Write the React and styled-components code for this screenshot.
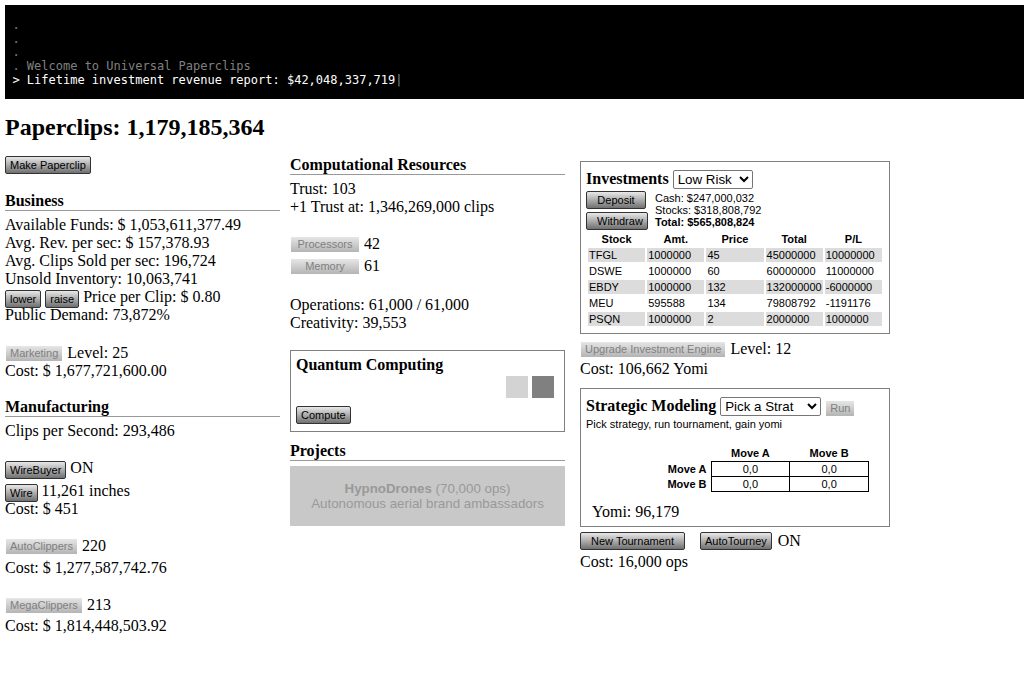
import React from 'react'
import styled, { createGlobalStyle, css } from 'styled-components'

const GlobalStyle = createGlobalStyle`
  html, body { margin: 0; padding: 0; background: #fff; }
  body {
    font-family: "Liberation Serif", "Times New Roman", serif;
    font-size: 16px;
    line-height: 18px;
    color: #000;
  }
`

const Page = styled.div`
  padding: 5px 0 0 5px;
  width: 1019px;
  height: 678px;
  overflow: hidden;
`

const Console = styled.div`
  background: #000;
  height: 94px;
  box-sizing: border-box;
  padding: 14px 7.4px 0;
  font-family: "DejaVu Sans Mono", "Liberation Mono", monospace;
  font-size: 12px;
  line-height: 13.7px;
  white-space: pre;
`

const ConsoleLine = styled.div`
  color: ${(p) => (p.$current ? '#fff' : '#808080')};
`

const Cursor = styled.span`
  color: #888;
`

const Title = styled.h1`
  margin: 16px 0 0;
  font-size: 24px;
  line-height: 24px;
  font-weight: bold;
`

const Columns = styled.div`
  display: flex;
  margin-top: 16px;
`

const Column = styled.div`
  width: ${(p) => p.$width}px;
  margin-right: ${(p) => p.$gap || 0}px;
`

const Button = styled.button`
  display: inline-block;
  box-sizing: border-box;
  height: 18px;
  padding: 0 4px;
  margin: 0;
  font-family: "Liberation Sans", Arial, sans-serif;
  font-size: 11px;
  line-height: 14px;
  color: #000;
  border: 1px solid #333;
  border-radius: 2px;
  background: linear-gradient(#e8e8e8, #707070);
  vertical-align: middle;
  width: ${(p) => (p.$width ? `${p.$width}px` : 'auto')};

  ${(p) =>
    p.disabled &&
    css`
      height: 17px;
      line-height: 15px;
      margin-bottom: 2px;
      border: 1px solid transparent;
      border-radius: 0;
      color: #808080;
      background: linear-gradient(#e6e6e6, #b4b4b4) padding-box;
    `}
`

const WithdrawButton = styled(Button)`
  padding: 0 0 0 10px;
  text-align: left;
`

const SectionHead = styled.h3`
  margin: ${(p) => p.$top || 0}px 0 5px;
  font-size: 16px;
  line-height: 18px;
  font-weight: bold;
  border-bottom: 1px solid #999;
`

const Line = styled.div`
  height: 18px;
  margin-top: ${(p) => p.$top || 0}px;
  white-space: nowrap;
`

const TightButton = styled(Button)`
  margin-right: ${(p) => p.$right ?? 4}px;
`

const Panel = styled.div`
  box-sizing: border-box;
  width: ${(p) => p.$width}px;
  height: ${(p) => p.$height}px;
  margin-top: ${(p) => p.$top || 0}px;
  border: 1px solid #808080;
  padding: 5px;
`

const PanelTitle = styled.span`
  font-size: 16px;
  font-weight: bold;
  margin-right: 4px;
`

const QuantumHead = styled.div`
  font-size: 16px;
  line-height: 18px;
  font-weight: bold;
`

const Chips = styled.div`
  display: flex;
  justify-content: flex-end;
  gap: 4px;
  padding-right: 5px;
  margin-top: 2px;
  height: 29px;
`

const Chip = styled.div`
  width: 22px;
  height: 22px;
  background: ${(p) => p.$color};
`

const ProjectCard = styled.div`
  height: 60px;
  background: #c8c8c8;
  color: #999;
  font-family: "Liberation Sans", Arial, sans-serif;
  font-size: 13.33px;
  line-height: 15px;
  text-align: center;
  box-sizing: border-box;
  padding-top: 15px;
`

const PanelRow = styled.div`
  display: flex;
  align-items: center;
  height: 23px;
`

const Select = styled.select`
  box-sizing: border-box;
  height: 19px;
  width: ${(p) => p.$width}px;
  margin: 2px 4px 0 0;
  padding: 0;
  font-family: "Liberation Sans", Arial, sans-serif;
  font-size: 13.33px;
  background: #fff;
  color: #000;
  border: 1px solid #767676;
  border-radius: 2px;
`

const RunButton = styled(Button)`
  margin: 6px 0 0;
`

const FundRow = styled.div`
  display: flex;
  height: 39px;
  margin-top: 1px;
`

const FundButtons = styled.div`
  display: flex;
  flex-direction: column;
  align-items: flex-start;
  gap: 3px;
  width: 69px;
`

const Stats = styled.div`
  font-family: "Liberation Sans", Arial, sans-serif;
  font-size: 11px;
  line-height: 12px;
  padding-top: 1px;
`

const Bold = styled.strong`
  font-weight: bold;
`

const StockTable = styled.table`
  width: 298px;
  table-layout: fixed;
  border-collapse: separate;
  border-spacing: 2px;
  margin: 0;
  font-family: "Liberation Sans", Arial, sans-serif;
  font-size: 11px;
  line-height: 14px;

  th { padding: 0; height: 14px; font-weight: bold; text-align: center; }
  td { padding: 0 1px; height: 14px; overflow: hidden; white-space: nowrap; }
  tbody tr:nth-child(odd) td { background: #dcdcdc; }
`

const SmallText = styled.div`
  font-family: "Liberation Sans", Arial, sans-serif;
  font-size: 11px;
  line-height: 13px;
  margin-top: 1px;
`

const MoveTable = styled.table`
  border-collapse: collapse;
  table-layout: fixed;
  margin: 15px 0 0 77px;
  width: 206px;
  font-family: "Liberation Sans", Arial, sans-serif;
  font-size: 11px;
  line-height: 13px;

  th { padding: 0; height: 15px; font-weight: bold; }
  th.head { width: 44px; padding-right: 4px; text-align: right; white-space: nowrap; }
  td { border: 1px solid #000; padding: 0; text-align: center; height: 14px; }
`

const YomiLine = styled.div`
  height: 18px;
  margin: 11px 0 0 6px;
`

const StatusRow = styled.div`
  display: flex;
  align-items: center;
  height: 18px;
  margin-top: 5px;
`

const stocks = [
  ['TFGL', '1000000', '45', '45000000', '10000000'],
  ['DSWE', '1000000', '60', '60000000', '11000000'],
  ['EBDY', '1000000', '132', '132000000', '-6000000'],
  ['MEU', '595588', '134', '79808792', '-1191176'],
  ['PSQN', '1000000', '2', '2000000', '1000000'],
]

export default function App() {
  return (
    <Page>
      <GlobalStyle />
      <Console>
        <ConsoleLine>.</ConsoleLine>
        <ConsoleLine>.</ConsoleLine>
        <ConsoleLine>.</ConsoleLine>
        <ConsoleLine>. Welcome to Universal Paperclips</ConsoleLine>
        <ConsoleLine $current>
          {'> Lifetime investment revenue report: $42,048,337,719'}
          <Cursor>|</Cursor>
        </ConsoleLine>
      </Console>

      <Title>Paperclips: 1,179,185,364</Title>

      <Columns>
        <Column $width={275} $gap={10}>
          <Button>Make Paperclip</Button>

          <SectionHead $top={18}>Business</SectionHead>
          <Line>Available Funds: $ 1,053,611,377.49</Line>
          <Line>Avg. Rev. per sec: $ 157,378.93</Line>
          <Line>Avg. Clips Sold per sec: 196,724</Line>
          <Line>Unsold Inventory: 10,063,741</Line>
          <Line>
            <TightButton>lower</TightButton>
            <TightButton>raise</TightButton>
            Price per Clip: $ 0.80
          </Line>
          <Line>Public Demand: 73,872%</Line>
          <Line $top={20}>
            <TightButton disabled>Marketing</TightButton>
            Level: 25
          </Line>
          <Line>Cost: $ 1,677,721,600.00</Line>

          <SectionHead $top={18}>Manufacturing</SectionHead>
          <Line>Clips per Second: 293,486</Line>
          <Line $top={19}>
            <TightButton>WireBuyer</TightButton>
            ON
          </Line>
          <Line $top={5}>
            <TightButton>Wire</TightButton>
            11,261 inches
          </Line>
          <Line>Cost: $ 451</Line>
          <Line $top={19}>
            <TightButton disabled>AutoClippers</TightButton>
            220
          </Line>
          <Line $top={4}>Cost: $ 1,277,587,742.76</Line>
          <Line $top={19}>
            <TightButton disabled>MegaClippers</TightButton>
            213
          </Line>
          <Line $top={3}>Cost: $ 1,814,448,503.92</Line>
        </Column>

        <Column $width={275} $gap={15}>
          <SectionHead $top={1}>Computational Resources</SectionHead>
          <Line>Trust: 103</Line>
          <Line>+1 Trust at: 1,346,269,000 clips</Line>
          <Line $top={19}>
            <TightButton disabled $width={70} $right={4}>Processors</TightButton>
            42
          </Line>
          <Line $top={4}>
            <TightButton disabled $width={70} $right={4}>Memory</TightButton>
            61
          </Line>
          <Line $top={21}>Operations: 61,000 / 61,000</Line>
          <Line>Creativity: 39,553</Line>

          <Panel $width={275} $height={82} $top={18}>
            <QuantumHead>Quantum Computing</QuantumHead>
            <Chips>
              <Chip $color="#d3d3d3" />
              <Chip $color="#808080" />
            </Chips>
            <Button>Compute</Button>
          </Panel>

          <SectionHead $top={10}>Projects</SectionHead>
          <ProjectCard>
            <div>
              <Bold>HypnoDrones</Bold> (70,000 ops)
            </div>
            <div>Autonomous aerial brand ambassadors</div>
          </ProjectCard>
        </Column>

        <Column $width={310}>
          <Panel $width={310} $height={173} $top={6}>
            <PanelRow>
              <PanelTitle>Investments</PanelTitle>
              <Select $width={80}>
                <option>Low Risk</option>
              </Select>
            </PanelRow>
            <FundRow>
              <FundButtons>
                <Button $width={60}>Deposit</Button>
                <WithdrawButton $width={62}>Withdraw</WithdrawButton>
              </FundButtons>
              <Stats>
                <div>Cash: $247,000,032</div>
                <div>Stocks: $318,808,792</div>
                <Bold>Total: $565,808,824</Bold>
              </Stats>
            </FundRow>
            <StockTable>
              <thead>
                <tr>
                  <th>Stock</th>
                  <th>Amt.</th>
                  <th>Price</th>
                  <th>Total</th>
                  <th>P/L</th>
                </tr>
              </thead>
              <tbody>
                {stocks.map((row) => (
                  <tr key={row[0]}>
                    {row.map((cell, i) => (
                      <td key={i}>{cell}</td>
                    ))}
                  </tr>
                ))}
              </tbody>
            </StockTable>
          </Panel>

          <Line $top={6}>
            <TightButton disabled>Upgrade Investment Engine</TightButton>
            Level: 12
          </Line>
          <Line $top={2}>Cost: 106,662 Yomi</Line>

          <Panel $width={310} $height={139} $top={10}>
            <PanelRow>
              <PanelTitle>Strategic Modeling</PanelTitle>
              <Select $width={101}>
                <option>Pick a Strat</option>
              </Select>
              <RunButton disabled $width={30}>Run</RunButton>
            </PanelRow>
            <SmallText>Pick strategy, run tournament, gain yomi</SmallText>
            <MoveTable>
              <thead>
                <tr>
                  <th className="head"></th>
                  <th>Move A</th>
                  <th>Move B</th>
                </tr>
              </thead>
              <tbody>
                <tr>
                  <th className="head">Move A</th>
                  <td>0,0</td>
                  <td>0,0</td>
                </tr>
                <tr>
                  <th className="head">Move B</th>
                  <td>0,0</td>
                  <td>0,0</td>
                </tr>
              </tbody>
            </MoveTable>
            <YomiLine>Yomi: 96,179</YomiLine>
          </Panel>

          <StatusRow>
            <TightButton $width={105} $right={15}>New Tournament</TightButton>
            <TightButton $right={6}>AutoTourney</TightButton>
            ON
          </StatusRow>
          <Line $top={3}>Cost: 16,000 ops</Line>
        </Column>
      </Columns>
    </Page>
  )
}
